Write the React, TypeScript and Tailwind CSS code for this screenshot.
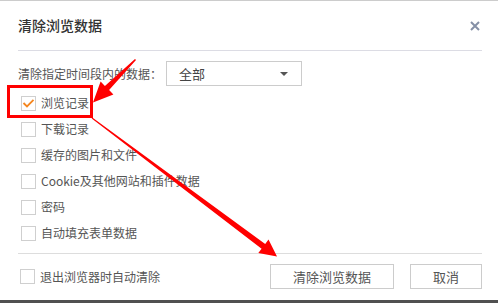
import React from 'react';

const items = [
  { label: '浏览记录', checked: true },
  { label: '下载记录', checked: false },
  { label: '缓存的图片和文件', checked: false },
  { label: 'Cookie及其他网站和插件数据', checked: false },
  { label: '密码', checked: false },
  { label: '自动填充表单数据', checked: false },
];

function Checkbox({ checked }: { checked?: boolean }) {
  return (
    <span className="w-[15px] h-[15px] shrink-0 border border-[#cfcfcf] bg-white flex items-center justify-center">
      {checked && (
        <svg width="15" height="15" viewBox="0 0 15 15" className="-m-px">
          <polyline points="2.5,7 6,10.5 12.5,3.8" fill="none" stroke="#f5861f" strokeWidth="1.8" />
        </svg>
      )}
    </span>
  );
}

export default function App() {
  return (
    <div
      className="relative w-[498px] h-[303px] bg-white border-t border-[#cccccc] flex flex-col overflow-hidden"
      style={{ fontFamily: '"Noto Sans CJK SC", "Noto Sans", sans-serif' }}
    >
      <div className="flex flex-col pl-[18px] pr-[16px] flex-1">
        {/* Header */}
        <div className="h-[49px] flex items-center justify-between">
          <span className="text-[14px] font-medium text-[#333]">清除浏览数据</span>
          <svg width="10" height="10" viewBox="0 0 10 10" className="mr-[2px]">
            <path d="M1 1 L9 9 M9 1 L1 9" stroke="#8590a6" strokeWidth="2" />
          </svg>
        </div>
        <div className="h-px bg-[#dcdce4]" />

        {/* Time range */}
        <div className="mt-[10px] h-[25px] flex items-center">
          <span className="w-[148px] text-[12px] text-[#555]">清除指定时间段内的数据：</span>
          <div className="w-[136px] h-[25px] border border-[#cccccc] flex items-center justify-between pl-[12px] pr-[13px]">
            <span className="text-[13px] text-[#444]">全部</span>
            <svg width="8" height="4" viewBox="0 0 8 4">
              <polygon points="0,0 8,0 4,4" fill="#555" />
            </svg>
          </div>
        </div>

        {/* Items */}
        <div className="mt-[4px] flex flex-col">
          {items.map((it) => (
            <div key={it.label} className="h-[26px] flex items-center gap-[5px] pl-[3px]">
              <Checkbox checked={it.checked} />
              <span className="text-[12px] text-[#555]">{it.label}</span>
            </div>
          ))}
        </div>

        <div className="mt-[7px] h-px bg-[#dddddd]" />

        {/* Footer */}
        <div className="mt-[10px] h-[25px] flex items-center">
          <div className="flex items-center gap-[5px] pl-[2px]">
            <Checkbox />
            <span className="text-[12px] text-[#555]">退出浏览器时自动清除</span>
          </div>
          <div className="ml-auto flex gap-[16px]">
            <button className="w-[124px] h-[25px] border border-[#cccccc] bg-white text-[13px] text-[#555]">
              清除浏览数据
            </button>
            <button className="w-[72px] h-[25px] border border-[#cccccc] bg-white text-[13px] text-[#555]">
              取消
            </button>
          </div>
        </div>
      </div>
      <div className="h-[3px] bg-[#505050]" />

      {/* Annotation overlay */}
      <svg className="absolute left-0 top-0 pointer-events-none" width="498" height="303" viewBox="0 1 498 303">
        <rect x="8.5" y="86.5" width="83" height="30" fill="none" stroke="#ff0000" strokeWidth="3" />
        <polygon
          points="135,59 104.9,85.9 100.6,81.6 93,102.5 113.4,94.4 109.1,90.1 136,60"
          fill="#ff0000"
        />
        <polygon
          points="92.3,117.6 91.7,118.4 261.6,248.7 258.3,253.1 277,256.5 268.5,239.5 265.2,243.9"
          fill="#ff0000"
        />
      </svg>
    </div>
  );
}
